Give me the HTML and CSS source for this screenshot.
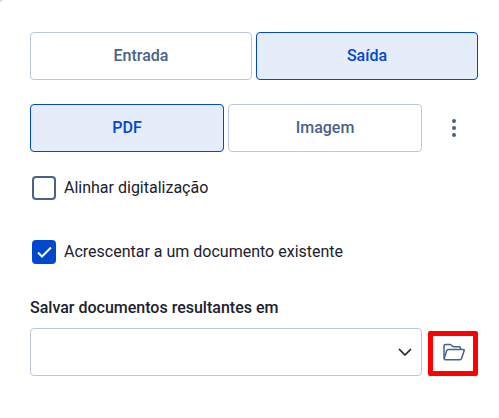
FILE: index.html
```html
<!DOCTYPE html>
<html lang="pt">
<head>
<meta charset="utf-8">
<meta name="viewport" content="width=device-width, initial-scale=1">
<title>Saída</title>
<link rel="stylesheet" href="styles.css">
</head>
<body>
<main class="panel">
  <div class="segments">
    <button type="button" class="segment">Entrada</button>
    <button type="button" class="segment selected" aria-pressed="true">Saída</button>
  </div>

  <div class="row format-row">
    <div class="segments">
      <button type="button" class="segment selected" aria-pressed="true">PDF</button>
      <button type="button" class="segment">Imagem</button>
    </div>
    <button type="button" class="icon-button" aria-label="Mais opções">
      <svg width="24" height="24" viewBox="0 0 24 24" fill="currentColor" aria-hidden="true">
        <circle cx="12" cy="5" r="2"/><circle cx="12" cy="12" r="2"/><circle cx="12" cy="19" r="2"/>
      </svg>
    </button>
  </div>

  <div class="check-row">
    <input type="checkbox" id="align" class="check">
    <label for="align">Alinhar digitalização</label>
  </div>
  <div class="check-row">
    <span class="check-box">
      <input type="checkbox" id="append" class="check" checked>
      <svg class="tick" width="24" height="24" viewBox="0 0 24 24" fill="none" stroke="currentColor" stroke-width="2" aria-hidden="true"><path d="M6 12.500l4 4 9-9"/></svg>
    </span>
    <label for="append">Acrescentar a um documento existente</label>
  </div>

  <label class="field-label" for="destination">Salvar documentos resultantes em</label>
  <div class="row">
    <div class="select-box">
      <select id="destination" class="select"><option></option></select>
      <svg class="chevron" width="16" height="16" viewBox="0 0 16 16" fill="none" stroke="currentColor" stroke-width="1.7" stroke-linecap="round" stroke-linejoin="round" aria-hidden="true"><path d="M2.500 5.500L8 11l5.500-5.500"/></svg>
    </div>
    <button type="button" class="icon-button highlighted" aria-label="Procurar pasta">
      <svg width="24" height="24" viewBox="-1 1.500 24 24" fill="none" stroke="currentColor" stroke-width="1.5" stroke-linejoin="round" aria-hidden="true">
        <path d="M2 18V5.500Q2 4 3.500 4H8q.7 0 1.200.5l1.300 1.200q.5.5 1.200.5H17q1.500 0 1.500 1.500V9"/>
        <path d="M7 9h14.200q1.300 0 .9 1.200l-2.500 7.700q-.4 1.300-1.700 1.300H3.400q-1.500 0-1.100-1.400l2.300-7.500Q5 9 6.500 9z"/>
      </svg>
    </button>
  </div>
</main>
</body>
</html>
```

FILE: styles.css
```css
* {
  box-sizing: border-box;
}

body {
  margin: 0;
  background: #c3cfe5;
  color: #1b212c;
  font: 16px/24px Roboto, sans-serif;
}

.panel {
  min-height: 100vh;
  padding: 32px 21px 32px 30px;
  border-top-left-radius: 4px;
  background: #fff;
}

.row {
  display: flex;
  gap: 8px;
}

.segments {
  display: flex;
  flex: 1;
  gap: 4px;
}

.segment {
  flex: 1;
  height: 48px;
  padding: 0;
  border: 1px solid #bac7dc;
  border-radius: 4px;
  background: #fff;
  color: #4a6285;
  font: 500 16px/24px Roboto, sans-serif;
}

.selected {
  border-color: #0048d0;
  background: #e5ecfa;
  color: #0048d0;
}

.format-row {
  margin: 24px 0;
}

.icon-button {
  display: flex;
  align-items: center;
  justify-content: center;
  width: 48px;
  height: 48px;
  padding: 0;
  border: 0;
  border-radius: 4px;
  background: none;
  color: #4a6285;
}

.highlighted {
  align-self: flex-end;
  width: 50px;
  height: 45px;
  border: 5px solid #f00;
  border-radius: 2px;
}

.check-row {
  display: flex;
  align-items: center;
  gap: 8px;
  margin-bottom: 40px;
  padding-left: 2px;
}

.check {
  display: block;
  width: 24px;
  height: 24px;
  margin: 0;
  appearance: none;
  border: 2px solid #4a6285;
  border-radius: 4px;
  background: #fff;
}

.check:checked {
  border-color: #0048d0;
  background: #0048d0;
}

.check-box {
  position: relative;
}

.tick {
  position: absolute;
  inset: 0;
  color: #fff;
  pointer-events: none;
}

.field-label {
  display: block;
  margin: -8px 0 8px;
  font-weight: 500;
}

.select-box {
  position: relative;
  flex: 1;
  margin-right: -2px;
}

.select {
  display: block;
  width: 100%;
  height: 48px;
  padding: 0 40px 0 16px;
  appearance: none;
  border: 1px solid #bac7dc;
  border-radius: 4px;
  background: #fff;
  color: inherit;
  font: inherit;
}

.chevron {
  position: absolute;
  top: 16px;
  right: 9px;
  pointer-events: none;
}
```
